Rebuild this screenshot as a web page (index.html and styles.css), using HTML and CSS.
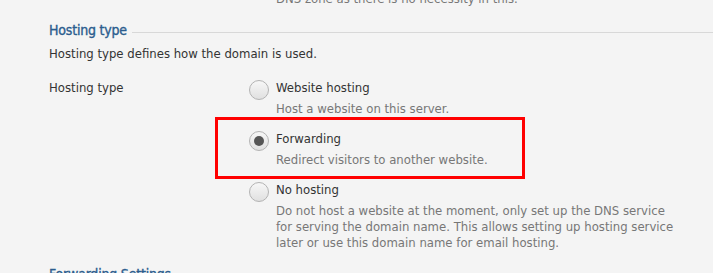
FILE: index.html
```html
<!DOCTYPE html>
<html lang="en">
<head>
  <meta charset="UTF-8" />
  <title>Hosting type</title>
  <link rel="stylesheet" href="styles.css">
</head>
<body>
  <div class="prev-note">DNS zone as there is no necessity in this.</div>

  <div class="section">
    <div class="section-title">
      <span>Hosting type</span>
      <div class="section-line"></div>
    </div>
    <p class="section-hint">Hosting type defines how the domain is used.</p>

    <div class="form-row">
      <div class="form-label">Hosting type</div>
      <div class="options">
        <div class="option">
          <span class="radio"></span>
          <div class="option-text">
            <div class="option-name">Website hosting</div>
            <div class="option-desc">Host a website on this server.</div>
          </div>
        </div>
        <div class="option highlighted">
          <span class="radio checked"></span>
          <div class="option-text">
            <div class="option-name">Forwarding</div>
            <div class="option-desc">Redirect visitors to another website.</div>
          </div>
        </div>
        <div class="option">
          <span class="radio"></span>
          <div class="option-text">
            <div class="option-name">No hosting</div>
            <div class="option-desc">Do not host a website at the moment, only set up the DNS service<br>for serving the domain name. This allows setting up hosting service<br>later or use this domain name for email hosting.</div>
          </div>
        </div>
      </div>
    </div>
  </div>

  <div class="section">
    <div class="section-title">
      <span>Forwarding Settings</span>
    </div>
  </div>
</body>
</html>
```

FILE: styles.css
```css
body {
  font-family: "DejaVu Sans Condensed", "DejaVu Sans", sans-serif;
  font-size: 13px;
  line-height: 16px;
  background: #f4f4f4;
  color: #333;
  margin: 0;
  padding: 0 0 0 49px;
  height: 273px;
  overflow: hidden;
}

.prev-note {
  margin: -9px 0 0 227px;
  color: #777;
}

.section {
  margin-top: 13px;
}

.section-title {
  display: flex;
  align-items: center;
  color: #2b5d8e;
  font-size: 14px;
  letter-spacing: -0.2px;
  -webkit-text-stroke: 0.35px #2b5d8e;
  line-height: 20px;
}

.section-line {
  flex: 1;
  height: 1px;
  background: #d8d8d8;
  margin-left: 5px;
  margin-top: 4px;
}

.section-hint {
  margin: 6px 0 0 0;
}

.form-row {
  display: flex;
  margin-top: 18px;
}

.form-label {
  width: 200px;
}

.option {
  display: flex;
  position: relative;
  margin-bottom: 14px;
}

.option:last-child {
  margin-bottom: 0;
}

.option.highlighted::after {
  content: "";
  position: absolute;
  left: -34px;
  top: -14px;
  width: 304px;
  height: 56px;
  border: 3px solid #f00;
}

.radio {
  flex: none;
  width: 18px;
  height: 18px;
  border: 1px solid #b3b3b3;
  border-radius: 50%;
  background: linear-gradient(#f7f7f7, #e0e0e0);
  margin-right: 7px;
  display: flex;
  align-items: center;
  justify-content: center;
}

.radio.checked::before {
  content: "";
  width: 10px;
  height: 10px;
  border-radius: 50%;
  background: #555;
}

.option-name {
  color: #333;
}

.option-desc {
  color: #777;
  margin-top: 5px;
}
```
